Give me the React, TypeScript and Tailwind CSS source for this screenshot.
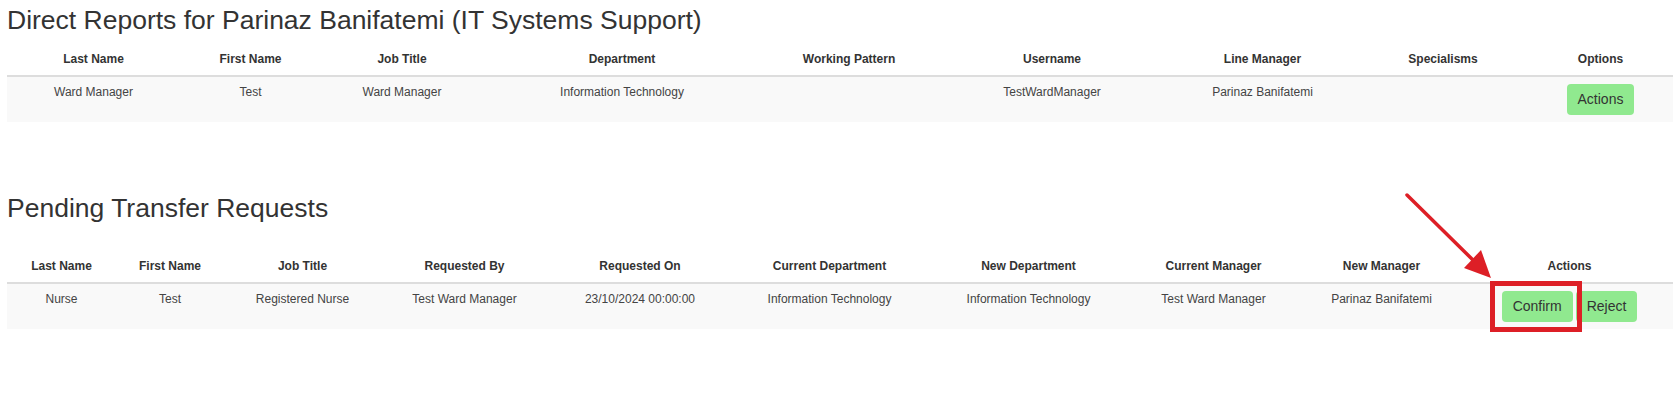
import React from "react";

const directCols = [
  { label: "Last Name", w: "w-[173px]" },
  { label: "First Name", w: "w-[141px]" },
  { label: "Job Title", w: "w-[162px]" },
  { label: "Department", w: "w-[278px]" },
  { label: "Working Pattern", w: "w-[176px]" },
  { label: "Username", w: "w-[230px]" },
  { label: "Line Manager", w: "w-[191px]" },
  { label: "Specialisms", w: "w-[170px]" },
  { label: "Options", w: "w-[145px]" },
];

const directRow = [
  "Ward Manager",
  "Test",
  "Ward Manager",
  "Information Technology",
  "",
  "TestWardManager",
  "Parinaz Banifatemi",
  "",
];

const pendingCols = [
  { label: "Last Name", w: "w-[109px]" },
  { label: "First Name", w: "w-[108px]" },
  { label: "Job Title", w: "w-[157px]" },
  { label: "Requested By", w: "w-[167px]" },
  { label: "Requested On", w: "w-[184px]" },
  { label: "Current Department", w: "w-[195px]" },
  { label: "New Department", w: "w-[203px]" },
  { label: "Current Manager", w: "w-[167px]" },
  { label: "New Manager", w: "w-[169px]" },
  { label: "Actions", w: "w-[207px]" },
];

const pendingRow = [
  "Nurse",
  "Test",
  "Registered Nurse",
  "Test Ward Manager",
  "23/10/2024 00:00:00",
  "Information Technology",
  "Information Technology",
  "Test Ward Manager",
  "Parinaz Banifatemi",
];

const Btn = ({ children }: { children: React.ReactNode }) => (
  <button className="inline-block h-[31px] px-[11px] text-[14px] leading-[31px] rounded-[4px] bg-[#90e98f] text-[#333]">
    {children}
  </button>
);

const th = "pt-[8px] pb-[7px] text-[12px] leading-[17px] font-bold text-[#333] text-center border-b-2 border-[#dddddd]";
const td = "pt-[7px] pb-[7px] text-[12px] leading-[17px] text-[#444] text-center align-top";

const App = () => {
  return (
    <div className="relative w-[1680px] h-[399px] bg-white font-['Liberation_Sans',Arial,sans-serif] text-[#333]">
      <div className="px-[7px] pt-[6px]">
        <h2 className="text-[26.5px] leading-[1.1] mb-[8px]">
          Direct Reports for Parinaz Banifatemi (IT Systems Support)
        </h2>
        <table className="w-full table-fixed border-collapse">
          <colgroup>
            {directCols.map((c) => (
              <col key={c.label} className={c.w} />
            ))}
          </colgroup>
          <thead>
            <tr>
              {directCols.map((c) => (
                <th key={c.label} className={th}>
                  {c.label}
                </th>
              ))}
            </tr>
          </thead>
          <tbody>
            <tr className="bg-[#f9f9f9]">
              {directRow.map((v, i) => (
                <td key={i} className={td}>
                  {v}
                </td>
              ))}
              <td className={td}>
                <Btn>Actions</Btn>
              </td>
            </tr>
          </tbody>
        </table>

        <h2 className="text-[26.5px] leading-[1.1] mt-[72px] mb-[27px]">
          Pending Transfer Requests
        </h2>
        <table className="w-full table-fixed border-collapse">
          <colgroup>
            {pendingCols.map((c) => (
              <col key={c.label} className={c.w} />
            ))}
          </colgroup>
          <thead>
            <tr>
              {pendingCols.map((c) => (
                <th key={c.label} className={th}>
                  {c.label}
                </th>
              ))}
            </tr>
          </thead>
          <tbody>
            <tr className="bg-[#f9f9f9]">
              {pendingRow.map((v, i) => (
                <td key={i} className={td}>
                  {v}
                </td>
              ))}
              <td className={td}>
                <div className="flex justify-center gap-[3px]">
                  <Btn>Confirm</Btn>
                  <Btn>Reject</Btn>
                </div>
              </td>
            </tr>
          </tbody>
        </table>
      </div>

      {/* annotation: arrow + box around Confirm */}
      <svg
        className="absolute left-0 top-0 pointer-events-none"
        width={1680}
        height={399}
        viewBox="0 0 1680 399"
      >
        <line x1={1407} y1={195} x2={1476} y2={263} stroke="#dd1f26" strokeWidth={3.5} strokeLinecap="round" />
        <polygon points="1491,278 1464,268 1481,250" fill="#dd1f26" />
        <rect x={1492.5} y={283.5} width={87} height={46} fill="none" stroke="#dd1f26" strokeWidth={5} />
      </svg>
    </div>
  );
};

export default App;
